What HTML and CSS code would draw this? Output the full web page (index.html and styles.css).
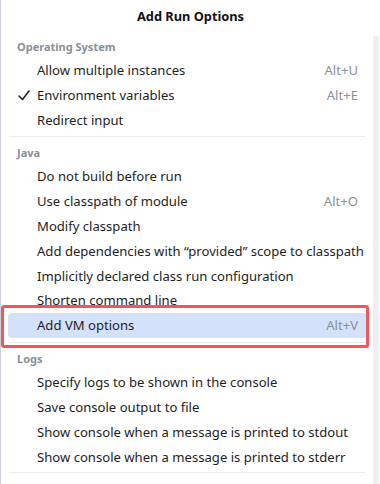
FILE: index.html
```html
<!DOCTYPE html>
<html>
<head>
<meta charset="utf-8">
<link rel="stylesheet" href="styles.css">
</head>
<body>
<div class="popup">
  <div class="title">Add Run Options</div>
  <div class="body">
    <div class="list">
      <div class="header">Operating System</div>
      <div class="item"><span class="label">Allow multiple instances</span><span class="key">Alt+U</span></div>
      <div class="item"><svg class="check" width="12" height="11" viewBox="0 0 12 11"><path d="M1 6 L4.5 9.5 L11 1" fill="none" stroke="#222" stroke-width="1.6" stroke-linecap="round" stroke-linejoin="round"/></svg><span class="label">Environment variables</span><span class="key">Alt+E</span></div>
      <div class="item"><span class="label">Redirect input</span></div>
      <div class="sep sep1"></div>
      <div class="header">Java</div>
      <div class="item"><span class="label">Do not build before run</span></div>
      <div class="item"><span class="label">Use classpath of module</span><span class="key">Alt+O</span></div>
      <div class="item"><span class="label">Modify classpath</span></div>
      <div class="item"><span class="label">Add dependencies with “provided” scope to classpath</span></div>
      <div class="item"><span class="label">Implicitly declared class run configuration</span></div>
      <div class="item"><span class="label">Shorten command line</span></div>
      <div class="item selected"><span class="label">Add VM options</span><span class="key">Alt+V</span></div>
      <div class="sep sep2"></div>
      <div class="header">Logs</div>
      <div class="item"><span class="label">Specify logs to be shown in the console</span></div>
      <div class="item"><span class="label">Save console output to file</span></div>
      <div class="item"><span class="label">Show console when a message is printed to stdout</span></div>
      <div class="item"><span class="label">Show console when a message is printed to stderr</span></div>
      <div class="sep sep3"></div>
    </div>
    <div class="scrollbar"></div>
  </div>
  <div class="annotation"></div>
</div>
</body>
</html>
```

FILE: styles.css
```css
html, body {
  margin: 0;
  padding: 0;
  background: #ffffff;
}
body {
  width: 380px;
  height: 484px;
  overflow: hidden;
  font-family: "Noto Sans", "Open Sans", sans-serif;
  font-size: 13.1px;
  color: #1e1e1e;
}
.popup {
  position: relative;
  height: 484px;
  border-left: 1px solid #cfd3dc;
  box-sizing: border-box;
}
.title {
  height: 36px;
  line-height: 33px;
  text-align: center;
  font-weight: 700;
  font-size: 12.8px;
  color: #111;
}
.body {
  display: flex;
  height: 448px;
}
.list {
  flex: 1;
  min-width: 0;
  display: flex;
  flex-direction: column;
  padding-left: 7px;
  padding-right: 6px;
}
.scrollbar {
  flex: none;
  width: 6px;
  margin-right: 1px;
  background: #efefef;
}
.header {
  height: 22px;
  line-height: 22px;
  padding-left: 9px;
  font-size: 11px;
  font-weight: 700;
  color: #8b8f96;
  flex: none;
}
.item {
  position: relative;
  display: flex;
  align-items: center;
  height: 24.8px;
  padding-left: 29px;
  padding-right: 9px;
  border-radius: 4px;
  white-space: nowrap;
  flex: none;
  min-width: 0;
}
.item .label {
  flex: 1;
}
.item .key {
  color: #8b8f96;
}
.check {
  position: absolute;
  left: 10px;
  top: 7px;
}
.selected {
  background: #d4e1fb;
}
.sep {
  height: 1px;
  background: #ebebeb;
  margin: 0 1px;
  flex: none;
}
.sep1 {
  margin-top: 3.6px;
  margin-bottom: 5px;
}
.sep2 {
  margin-top: 4.4px;
  margin-bottom: 5px;
}
.sep3 {
  margin-top: 2.8px;
}
.annotation {
  position: absolute;
  left: 0px;
  top: 305px;
  width: 368px;
  height: 43px;
  border: 3px solid #f1575a;
  border-radius: 3px;
  box-sizing: border-box;
}
```
